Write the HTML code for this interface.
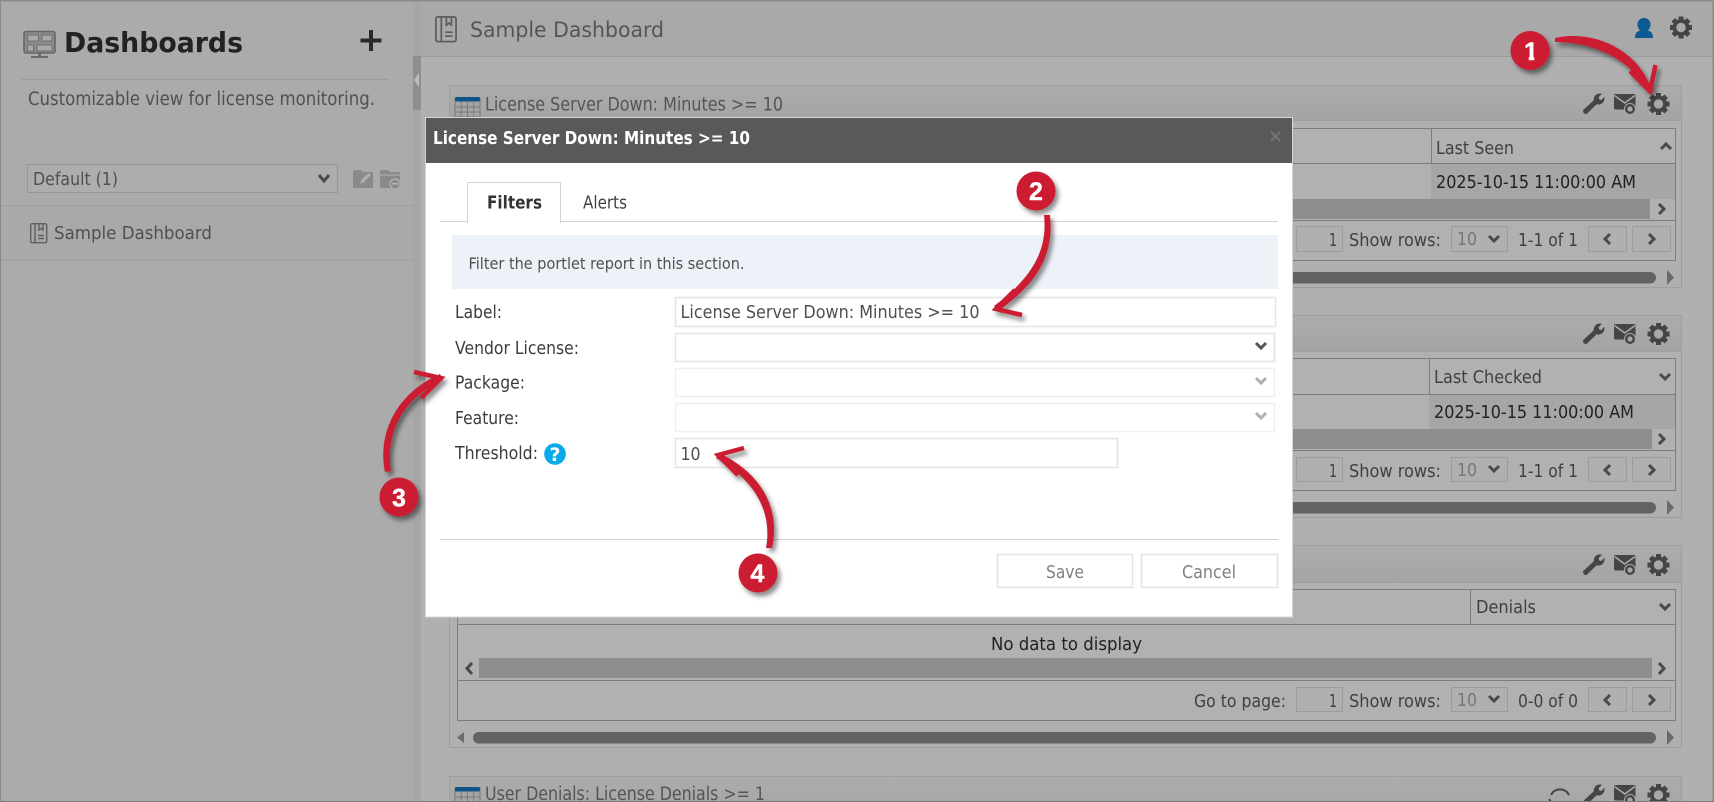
<!DOCTYPE html>
<html lang="en">
<head>
<meta charset="utf-8">
<title>Dashboards</title>
<style>
html,body{margin:0;padding:0;width:1714px;height:802px;overflow:hidden;background:#b0b0b0}
svg{display:block}
text{font-family:"DejaVu Sans","Liberation Sans",sans-serif}
.b{font-weight:bold}
.n{font-family:"Liberation Sans",sans-serif;font-weight:bold;fill:#fff;font-size:25px;text-anchor:middle;stroke:#fff;stroke-width:.4}
.chev{fill:none;stroke:#4a4a4a;stroke-width:3;stroke-linecap:butt}
</style>
</head>
<body>
<svg width="1714" height="802" viewBox="0 0 1714 802" xmlns="http://www.w3.org/2000/svg">
<defs>
<filter id="ds" x="-40%" y="-40%" width="190%" height="190%">
<feDropShadow dx="3" dy="4" stdDeviation="2.5" flood-color="#000" flood-opacity=".45"/>
</filter>
<linearGradient id="ph" x1="0" y1="0" x2="0" y2="1"><stop offset="0" stop-color="#acacac"/><stop offset="1" stop-color="#a4a4a4"/></linearGradient>
<g id="gear">
<circle r="6.6" fill="none" stroke="#454545" stroke-width="3.8"/>
<g fill="#454545">
<rect x="-2.5" y="-11" width="5" height="4.5"/>
<rect x="-2.5" y="-11" width="5" height="4.5" transform="rotate(45)"/>
<rect x="-2.5" y="-11" width="5" height="4.5" transform="rotate(90)"/>
<rect x="-2.5" y="-11" width="5" height="4.5" transform="rotate(135)"/>
<rect x="-2.5" y="-11" width="5" height="4.5" transform="rotate(180)"/>
<rect x="-2.5" y="-11" width="5" height="4.5" transform="rotate(225)"/>
<rect x="-2.5" y="-11" width="5" height="4.5" transform="rotate(270)"/>
<rect x="-2.5" y="-11" width="5" height="4.5" transform="rotate(315)"/>
</g>
</g>
<path id="wrench" fill="#454545" d="M1.500 16.800 L11.800 7.200 C11.400 3 15 -.6 20 .8 L16.600 4.200 L17.200 6.400 L19.400 7 L22.400 3.800 C23.400 9 19 12.800 14.600 11.200 L5 20.600 C3.200 22.400 -.2 19 1.500 16.800Z"/>
<g id="mail">
<rect x="0" y="0" width="21.500" height="15.500" rx="1.500" fill="#454545"/>
<path d="M0.500 1.500 L10.700 9 L21 1.500" fill="none" stroke="#a8a8a8" stroke-width="1.600"/>
<circle cx="16" cy="15" r="6" fill="#a8a8a8"/>
<circle cx="16" cy="15" r="3.800" fill="none" stroke="#454545" stroke-width="2.400"/>
</g>
<g id="book" fill="none" stroke="#5f5f5f" stroke-width="1.400">
<rect x=".7" y=".7" width="16" height="19" rx="1.500"/>
<path d="M5 .7 V19.700"/>
<path d="M9 1 V7 L11 5.400 L13 7 V1" />
<path d="M8 12.500 H14 M8 15.500 H14"/>
</g>
<g id="grid">
<rect x="0" y="1" width="25" height="24" fill="#a6a6a6" stroke="#777" stroke-width="1"/>
<rect x="0" y="0" width="25" height="4.500" rx="1.500" fill="#0d5488"/>
<path d="M6.200 5 V25 M12.500 5 V25 M18.700 5 V25 M0 10 H25 M0 15 H25 M0 20 H25" stroke="#7b7b7b" stroke-width="1" fill="none"/>
</g>
<g id="tools">
<use href="#wrench" x="0" y="0"/>
<use href="#mail" x="32" y="1"/>
<use href="#gear" x="76.500" y="11"/>
</g>
</defs>

<!-- base -->
<rect width="1714" height="802" fill="#b0b0b0"/>
<rect x="0" y="0" width="413" height="802" fill="#ababab"/>
<rect x="413" y="0" width="8" height="802" fill="#a6a6a6"/>
<rect x="421" y="0" width="1293" height="56" fill="#a9a9a9"/>
<rect x="421" y="56" width="1293" height="1" fill="#9d9d9d"/>
<rect x="413" y="56" width="8" height="54" fill="#8f8f8f"/>
<path d="M419 73 L414 80 L419 87Z" fill="#bdbdbd"/>

<!-- sidebar -->
<g>
<rect x="24" y="31.500" width="31" height="21.500" rx="2" fill="#8a8a8a" stroke="#666" stroke-width="1.600"/>
<rect x="38" y="53" width="3" height="3" fill="#6b6b6b"/>
<rect x="31" y="56" width="17" height="2" fill="#6b6b6b"/>
<g fill="#a9a9a9" stroke="#666" stroke-width=".8">
<rect x="27.500" y="35" width="11" height="6"/>
<rect x="42" y="35" width="10" height="6"/>
<rect x="27.500" y="45" width="6" height="6"/>
<rect x="37" y="45" width="15" height="6"/>
</g>
</g>
<text class="b" x="64" y="52" font-size="28" fill="#222" textLength="179" lengthAdjust="spacingAndGlyphs">Dashboards</text>
<path d="M371 30 V51 M360.500 40.500 H381.500" stroke="#2a2a2a" stroke-width="4" fill="none"/>
<rect x="21" y="79" width="367" height="1" fill="#9b9b9b"/>
<text x="28" y="105" font-size="18.500" fill="#505050" textLength="347" lengthAdjust="spacingAndGlyphs">Customizable view for license monitoring.</text>
<rect x="27.500" y="164.500" width="310" height="28" fill="#adadad" stroke="#979797"/>
<text x="33" y="185" font-size="18" fill="#505050" textLength="85" lengthAdjust="spacingAndGlyphs">Default (1)</text>
<path class="chev" d="M319 175 L324 181 L329 175"/>
<path d="M353 172 Q353 170 355 170 H361 L363 172 H372 Q373 172 373 174 V187 Q373 188 372 188 H354 Q353 188 353 187Z" fill="#8a8a8a"/>
<path d="M360 184 L362 179 L369 173 L371 175 L364 182Z" fill="#b0b0b0"/>
<path d="M380 172 Q380 170 382 170 H388 L390 172 H399 Q400 172 400 174 V187 Q400 188 399 188 H381 Q380 188 380 187Z" fill="#8a8a8a"/>
<path d="M380 175 H400" stroke="#b0b0b0" stroke-width="1"/>
<circle cx="395" cy="184" r="5" fill="#8a8a8a" stroke="#adadad" stroke-width="1.400"/>
<rect x="392" y="183" width="6" height="1.600" fill="#b5b5b5"/>
<rect x="1" y="205" width="412" height="1" fill="#9f9f9f"/>
<rect x="1" y="206" width="412" height="54" fill="#a9a9a9"/>
<rect x="1" y="260" width="412" height="1" fill="#9f9f9f"/>
<use href="#book" x="30" y="223"/>
<text x="54" y="239" font-size="18" fill="#505050" textLength="158" lengthAdjust="spacingAndGlyphs">Sample Dashboard</text>

<!-- main header -->
<use href="#book" transform="translate(435 16) scale(1.260 1.300)"/>
<text x="470" y="37" font-size="21" fill="#555" textLength="194" lengthAdjust="spacingAndGlyphs">Sample Dashboard</text>
<path d="M1644 18 C1648 18 1650.500 21 1650.500 24.500 C1650.500 27 1649.500 29 1648 30.500 C1651 31.500 1653 33 1653 38 H1635 C1635 33 1637 31.500 1640 30.500 C1638.500 29 1637.500 27 1637.500 24.500 C1637.500 21 1640 18 1644 18Z" fill="#0b5a94"/>
<use href="#gear" x="1681" y="27.500"/>

<!-- portlet 1 -->
<rect x="449.500" y="85.500" width="1232" height="202" fill="#b0b0b0" stroke="#9e9e9e"/>
<rect x="450" y="86" width="1231" height="34" fill="url(#ph)"/>
<rect x="450" y="120" width="1231" height="1" fill="#9e9e9e"/>
<use href="#grid" x="455" y="97"/>
<text x="485" y="110.500" font-size="18.500" fill="#555" textLength="298" lengthAdjust="spacingAndGlyphs">License Server Down: Minutes &gt;= 10</text>
<use href="#tools" x="1582" y="93"/>
<rect x="457.500" y="128.500" width="1218" height="132" fill="#b1b1b1" stroke="#7c7c7c"/>
<rect x="458" y="163" width="1217" height="1" fill="#7c7c7c"/>
<rect x="1431" y="129" width="1" height="34" fill="#7c7c7c"/>
<rect x="1431" y="164" width="244" height="35" fill="#a6a6a6"/>
<rect x="458" y="199" width="1192" height="20" fill="#8e8e8e"/>
<rect x="458" y="220" width="1217" height="1" fill="#7c7c7c"/>
<text x="1436" y="154" font-size="18" fill="#404040" textLength="78" lengthAdjust="spacingAndGlyphs">Last Seen</text>
<path class="chev" d="M1661 149 L1666 144 L1671 149"/>
<text x="1436" y="188" font-size="18" fill="#222" textLength="200" lengthAdjust="spacingAndGlyphs">2025-10-15 11:00:00 AM</text>
<path class="chev" d="M1659 204 L1664 209 L1659 214"/>
<rect x="1296.500" y="226.500" width="46" height="25" fill="#b0b0b0" stroke="#9c9c9c"/>
<text x="1329" y="246" font-size="17.500" fill="#404040" textLength="8" lengthAdjust="spacingAndGlyphs">1</text>
<text x="1349" y="246" font-size="17.500" fill="#404040" textLength="92" lengthAdjust="spacingAndGlyphs">Show rows:</text>
<rect x="1451.500" y="226.500" width="56" height="25" fill="#b0b0b0" stroke="#9c9c9c"/>
<text x="1457" y="245" font-size="18" fill="#777" textLength="20" lengthAdjust="spacingAndGlyphs">10</text>
<path class="chev" d="M1489 236 L1494 241 L1499 236"/>
<text x="1518" y="246" font-size="17.500" fill="#404040" textLength="60" lengthAdjust="spacingAndGlyphs">1-1 of 1</text>
<rect x="1588.500" y="226.500" width="38" height="25" fill="#b0b0b0" stroke="#9c9c9c"/>
<path class="chev" d="M1610 234 L1605 239 L1610 244"/>
<rect x="1632.500" y="226.500" width="38" height="25" fill="#b0b0b0" stroke="#9c9c9c"/>
<path class="chev" d="M1649 234 L1654 239 L1649 244"/>
<rect x="473" y="272" width="1183" height="11.500" rx="5.700" fill="#636363"/>
<path d="M1667 270 L1674 277.500 L1667 285Z" fill="#6a6a6a"/>

<!-- portlet 2 -->
<rect x="449.500" y="315.500" width="1232" height="202" fill="#b0b0b0" stroke="#9e9e9e"/>
<rect x="450" y="316" width="1231" height="35" fill="url(#ph)"/>
<rect x="450" y="351" width="1231" height="1" fill="#9e9e9e"/>
<use href="#tools" x="1582" y="323"/>
<rect x="457.500" y="358.500" width="1218" height="132" fill="#b1b1b1" stroke="#7c7c7c"/>
<rect x="458" y="394" width="1217" height="1" fill="#7c7c7c"/>
<rect x="1429" y="359" width="1" height="35" fill="#7c7c7c"/>
<rect x="1429" y="395" width="246" height="34" fill="#a6a6a6"/>
<rect x="458" y="429" width="1194" height="20" fill="#8e8e8e"/>
<rect x="458" y="450" width="1217" height="1" fill="#7c7c7c"/>
<text x="1434" y="383" font-size="18" fill="#404040" textLength="108" lengthAdjust="spacingAndGlyphs">Last Checked</text>
<path class="chev" d="M1660 374 L1665 379 L1670 374"/>
<text x="1434" y="418" font-size="18" fill="#222" textLength="200" lengthAdjust="spacingAndGlyphs">2025-10-15 11:00:00 AM</text>
<path class="chev" d="M1659 434 L1664 439 L1659 444"/>
<rect x="1296.500" y="457.500" width="46" height="24" fill="#b0b0b0" stroke="#9c9c9c"/>
<text x="1329" y="477" font-size="17.500" fill="#404040" textLength="8" lengthAdjust="spacingAndGlyphs">1</text>
<text x="1349" y="477" font-size="17.500" fill="#404040" textLength="92" lengthAdjust="spacingAndGlyphs">Show rows:</text>
<rect x="1451.500" y="457.500" width="56" height="24" fill="#b0b0b0" stroke="#9c9c9c"/>
<text x="1457" y="476" font-size="18" fill="#777" textLength="20" lengthAdjust="spacingAndGlyphs">10</text>
<path class="chev" d="M1489 466 L1494 471 L1499 466"/>
<text x="1518" y="477" font-size="17.500" fill="#404040" textLength="60" lengthAdjust="spacingAndGlyphs">1-1 of 1</text>
<rect x="1588.500" y="457.500" width="38" height="24" fill="#b0b0b0" stroke="#9c9c9c"/>
<path class="chev" d="M1610 465 L1605 470 L1610 475"/>
<rect x="1632.500" y="457.500" width="38" height="24" fill="#b0b0b0" stroke="#9c9c9c"/>
<path class="chev" d="M1649 465 L1654 470 L1649 475"/>
<rect x="473" y="502" width="1183" height="11.500" rx="5.700" fill="#636363"/>
<path d="M1667 500 L1674 507.500 L1667 515Z" fill="#6a6a6a"/>

<!-- portlet 3 -->
<rect x="449.500" y="545.500" width="1232" height="202" fill="#b0b0b0" stroke="#9e9e9e"/>
<rect x="450" y="546" width="1231" height="36" fill="url(#ph)"/>
<rect x="450" y="582" width="1231" height="1" fill="#9e9e9e"/>
<use href="#tools" x="1582" y="554"/>
<rect x="457.500" y="589.500" width="1218" height="131" fill="#b1b1b1" stroke="#7c7c7c"/>
<rect x="458" y="624" width="1217" height="1" fill="#7c7c7c"/>
<rect x="1470" y="590" width="1" height="34" fill="#7c7c7c"/>
<rect x="479" y="658" width="1173" height="20" fill="#8e8e8e"/>
<rect x="458" y="680" width="1217" height="1" fill="#7c7c7c"/>
<text x="1476" y="613" font-size="18" fill="#404040" textLength="60" lengthAdjust="spacingAndGlyphs">Denials</text>
<path class="chev" d="M1660 604 L1665 609 L1670 604"/>
<text x="991" y="650" font-size="18" fill="#222" textLength="151" lengthAdjust="spacingAndGlyphs">No data to display</text>
<path class="chev" d="M472 663 L467 668.500 L472 674"/>
<path class="chev" d="M1659 663 L1664 668.500 L1659 674"/>
<text x="1194" y="707" font-size="17.500" fill="#404040" textLength="92" lengthAdjust="spacingAndGlyphs">Go to page:</text>
<rect x="1296.500" y="687.500" width="46" height="24" fill="#b0b0b0" stroke="#9c9c9c"/>
<text x="1329" y="707" font-size="17.500" fill="#404040" textLength="8" lengthAdjust="spacingAndGlyphs">1</text>
<text x="1349" y="707" font-size="17.500" fill="#404040" textLength="92" lengthAdjust="spacingAndGlyphs">Show rows:</text>
<rect x="1451.500" y="687.500" width="56" height="24" fill="#b0b0b0" stroke="#9c9c9c"/>
<text x="1457" y="706" font-size="18" fill="#777" textLength="20" lengthAdjust="spacingAndGlyphs">10</text>
<path class="chev" d="M1489 696 L1494 701 L1499 696"/>
<text x="1518" y="707" font-size="17.500" fill="#404040" textLength="60" lengthAdjust="spacingAndGlyphs">0-0 of 0</text>
<rect x="1588.500" y="687.500" width="38" height="24" fill="#b0b0b0" stroke="#9c9c9c"/>
<path class="chev" d="M1610 695 L1605 700 L1610 705"/>
<rect x="1632.500" y="687.500" width="38" height="24" fill="#b0b0b0" stroke="#9c9c9c"/>
<path class="chev" d="M1649 695 L1654 700 L1649 705"/>
<path d="M464 732 L457 737.500 L464 743Z" fill="#6a6a6a"/>
<rect x="473" y="732" width="1183" height="11.500" rx="5.700" fill="#636363"/>
<path d="M1667 730 L1674 737.500 L1667 745Z" fill="#6a6a6a"/>

<!-- portlet 4 -->
<rect x="449.500" y="776.500" width="1232" height="40" fill="url(#ph)" stroke="#9e9e9e"/>
<use href="#grid" x="455" y="787"/>
<text x="485" y="800" font-size="18.500" fill="#555" textLength="280" lengthAdjust="spacingAndGlyphs">User Denials: License Denials &gt;= 1</text>
<path d="M1551 795 A10 10 0 0 1 1569 795 M1549 799 L1551 802" fill="none" stroke="#454545" stroke-width="2"/>
<use href="#tools" x="1582" y="784"/>

<!-- outer frame -->
<rect x="0" y="0" width="1714" height="1.500" fill="#8a8a8a"/>
<rect x="0" y="0" width="1" height="802" fill="#8a8a8a"/>
<rect x="1712.500" y="0" width="1.500" height="802" fill="#8a8a8a"/>
<rect x="0" y="801" width="1714" height="1" fill="#7e7e7e"/>

<!-- dialog -->
<rect x="425.500" y="117.500" width="867" height="499.500" fill="#fff" stroke="#d6d6d6"/>
<rect x="426" y="118" width="866" height="45" fill="#595959"/>
<text class="b" x="433" y="144" font-size="17.500" fill="#fff" textLength="317" lengthAdjust="spacingAndGlyphs">License Server Down: Minutes &gt;= 10</text>
<text class="b" x="1268" y="142" font-size="18" fill="#757575">×</text>

<rect x="440" y="221" width="838" height="1" fill="#d2d2d2"/>
<path d="M467.500 223 V182.500 H560.500 V223" fill="#fff" stroke="#d2d2d2"/>
<text class="b" x="487" y="208.500" font-size="17.500" fill="#333" textLength="55" lengthAdjust="spacingAndGlyphs">Filters</text>
<text x="583" y="208.500" font-size="17.500" fill="#404040" textLength="44" lengthAdjust="spacingAndGlyphs">Alerts</text>

<rect x="452" y="235" width="826" height="54" fill="#edf2f9"/>
<text x="468.500" y="269" font-size="16" fill="#505050" textLength="276" lengthAdjust="spacingAndGlyphs">Filter the portlet report in this section.</text>

<text x="455" y="318" font-size="17.500" fill="#3c3c3c" textLength="47" lengthAdjust="spacingAndGlyphs">Label:</text>
<text x="455" y="354" font-size="17.500" fill="#3c3c3c" textLength="124" lengthAdjust="spacingAndGlyphs">Vendor License:</text>
<text x="455" y="388.500" font-size="17.500" fill="#3c3c3c" textLength="70" lengthAdjust="spacingAndGlyphs">Package:</text>
<text x="455" y="424" font-size="17.500" fill="#3c3c3c" textLength="64" lengthAdjust="spacingAndGlyphs">Feature:</text>
<text x="455" y="459" font-size="17.500" fill="#3c3c3c" textLength="83" lengthAdjust="spacingAndGlyphs">Threshold:</text>
<circle cx="555" cy="454" r="10.800" fill="#0aa9ea"/>
<text class="b" x="555" y="461" font-size="19" fill="#fff" text-anchor="middle">?</text>

<rect x="675.500" y="297.500" width="600" height="29" fill="#fff" stroke="#e4e4e4" stroke-width="1.500"/>
<text x="680.500" y="318" font-size="18" fill="#505050" textLength="299" lengthAdjust="spacingAndGlyphs">License Server Down: Minutes &gt;= 10</text>
<rect x="675.500" y="333.500" width="599" height="28" fill="#fff" stroke="#e4e4e4" stroke-width="1.500"/>
<path d="M1256 343 L1261 348 L1266 343" fill="none" stroke="#555" stroke-width="3"/>
<rect x="675.500" y="368.500" width="599" height="28" fill="#fff" stroke="#f0f0f0" stroke-width="1.500"/>
<path d="M1256 378 L1261 383 L1266 378" fill="none" stroke="#b0b0b0" stroke-width="3"/>
<rect x="675.500" y="403.500" width="599" height="28" fill="#fff" stroke="#f0f0f0" stroke-width="1.500"/>
<path d="M1256 413 L1261 418 L1266 413" fill="none" stroke="#b0b0b0" stroke-width="3"/>
<rect x="675.500" y="438.500" width="442" height="29" fill="#fff" stroke="#e4e4e4" stroke-width="1.500"/>
<text x="680.500" y="460" font-size="18" fill="#505050" textLength="20" lengthAdjust="spacingAndGlyphs">10</text>

<rect x="440" y="539" width="838" height="1" fill="#cfcfcf"/>
<rect x="997.500" y="554.500" width="135" height="33" fill="#fff" stroke="#e4e4e4" stroke-width="1.500"/>
<text x="1046" y="578" font-size="18" fill="#808080" textLength="38" lengthAdjust="spacingAndGlyphs">Save</text>
<rect x="1141.500" y="554.500" width="136" height="33" fill="#fff" stroke="#e4e4e4" stroke-width="1.500"/>
<text x="1182" y="578" font-size="18" fill="#808080" textLength="54" lengthAdjust="spacingAndGlyphs">Cancel</text>

<!-- annotations -->
<g filter="url(#ds)">
<circle cx="1530" cy="50.500" r="19.500" fill="#cc1a30"/>
<path d="M1555 38 C1590 30 1636 46 1652 90 L1647 91 C1630 58 1592 42 1555 42Z" fill="#cc1a30"/>
<path d="M1630 71 L1650 91 L1655.500 65" fill="none" stroke="#cc1a30" stroke-width="4.500"/>

<circle cx="1036" cy="191" r="19.500" fill="#cc1a30"/>
<path d="M1044 215 L1050 215 C1054 252 1040 282 998 311 L994 306 C1032 278 1048 250 1044 215Z" fill="#cc1a30"/>
<path d="M1015 290 L996 309 L1022 315" fill="none" stroke="#cc1a30" stroke-width="4.500"/>

<circle cx="399" cy="497" r="19.500" fill="#cc1a30"/>
<path d="M385 472 L391 471 C385 430 405 397 443 380 L440 374 C399 392 377 430 385 472Z" fill="#cc1a30"/>
<path d="M414 372 L441 378 L421 398" fill="none" stroke="#cc1a30" stroke-width="4.500"/>

<circle cx="758" cy="573" r="19.500" fill="#cc1a30"/>
<path d="M766 548 L772 548 C780 512 765 475 719 453 L716 458 C753 479 773 510 766 548Z" fill="#cc1a30"/>
<path d="M744 448 L718 455 L738 475" fill="none" stroke="#cc1a30" stroke-width="4.500"/>
</g>
<text class="n" x="1531" y="60">1</text>
<rect x="1520" y="56.800" width="8.700" height="4" fill="#cc1a30"/>
<rect x="1534.300" y="56.800" width="8" height="4" fill="#cc1a30"/>
<text class="n" x="1036" y="200">2</text>
<text class="n" x="399" y="506.500">3</text>
<text class="n" x="757.500" y="582">4</text>
</svg>
</body>
</html>
